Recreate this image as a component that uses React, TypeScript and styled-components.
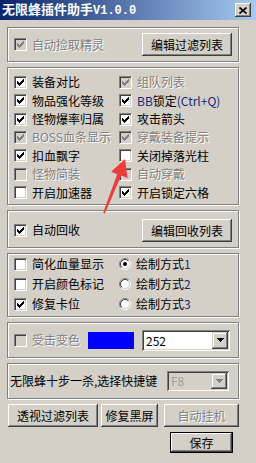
import React from 'react';
import styled, { createGlobalStyle, css } from 'styled-components';

const GlobalStyle = createGlobalStyle`
  html, body {
    margin: 0;
    padding: 0;
    background: #d4d0c8;
  }
  body {
    font-family: 'Noto Sans CJK SC', 'Liberation Sans', sans-serif;
    font-size: 12px;
    color: #000;
  }
`;

const disabledText = css`
  color: #808080;
  text-shadow: 1px 1px 0 #fff;
`;

const Window = styled.div`
  position: relative;
  width: 256px;
  height: 463px;
  background: #d4d0c8;
  overflow: hidden;
`;

const TitleBar = styled.div`
  height: 20px;
  display: flex;
  align-items: center;
  justify-content: space-between;
  padding: 0 5px 0 2px;
  background: linear-gradient(to right, #0a246a, #a6caf0);
`;

const TitleText = styled.span`
  color: #fff;
  font-weight: 700;
  font-size: 13px;
  line-height: 20px;
  white-space: nowrap;
`;

const TitleVersion = styled.span`
  font-family: 'Liberation Mono', monospace;
  font-size: 12px;
  font-weight: 700;
`;

const CloseButton = styled.div`
  box-sizing: border-box;
  width: 16px;
  height: 14px;
  display: flex;
  align-items: center;
  justify-content: center;
  background: #d4d0c8;
  box-shadow: inset -1px -1px #404040, inset 1px 1px #fff, inset -2px -2px #808080;
`;

const Body = styled.div`
  display: flex;
  flex-direction: column;
  gap: 5px;
  padding: 7px 17px 0 7px;
`;

const GroupBox = styled.div<{ $h: number }>`
  box-sizing: border-box;
  height: ${(p) => p.$h}px;
  border: 1px solid #808080;
  box-shadow: inset 1px 1px #fff, 1px 1px #fff;
`;

const SplitGroup = styled(GroupBox)<{ $pad?: string }>`
  display: flex;
  align-items: center;
  justify-content: space-between;
  padding: ${(p) => p.$pad ?? '0 6px'};
`;

const OptionGrid = styled(GroupBox)<{ $rows: string; $top: number }>`
  display: grid;
  grid-template-columns: 105px 1fr;
  grid-template-rows: ${(p) => p.$rows};
  align-items: center;
  padding: ${(p) => p.$top}px 0 0 6px;
`;

const ColorGroup = styled(GroupBox)`
  display: flex;
  align-items: center;
  padding: 0 0 0 6px;
`;

const CheckRow = styled.div<{ $w?: number }>`
  display: flex;
  align-items: center;
  gap: 5px;
  white-space: nowrap;
  ${(p) => p.$w && `width: ${p.$w}px; flex: none;`}
`;

const Label = styled.span<{ $disabled?: boolean }>`
  line-height: 14px;
  ${(p) => p.$disabled && disabledText}
`;

const Latin = styled.span`
  color: #16287c;
`;

const Box = styled.span<{ $disabled?: boolean }>`
  box-sizing: border-box;
  width: 13px;
  height: 13px;
  flex: none;
  border-top: 1px solid #808080;
  border-left: 1px solid #808080;
  border-right: 1px solid #fff;
  border-bottom: 1px solid #fff;
  box-shadow: inset 1px 1px #404040, inset -1px -1px #d4d0c8;
  background: ${(p) => (p.$disabled ? '#d4d0c8' : '#fff')};
`;

const PixelSvg = styled.svg`
  display: block;
  flex: none;
`;

const Button = styled.button<{ $w: number; $h?: number; $ml?: number; $default?: boolean; $disabled?: boolean }>`
  box-sizing: border-box;
  width: ${(p) => p.$w}px;
  height: ${(p) => p.$h ?? 23}px;
  padding: 0;
  margin: 0 0 0 ${(p) => p.$ml ?? 0}px;
  flex: none;
  background: #d4d0c8;
  font-family: inherit;
  font-size: 12px;
  color: #000;
  border: ${(p) => (p.$default ? '1px solid #000' : 'none')};
  box-shadow: inset -1px -1px #404040, inset 1px 1px #fff, inset -2px -2px #808080, inset 2px 2px #d4d0c8;
  ${(p) => p.$disabled && disabledText}
`;

const Swatch = styled.div`
  width: 46px;
  height: 17px;
  flex: none;
  background: #0000ff;
  margin-right: 8px;
`;

const Combo = styled.div<{ $w: number; $h: number; $disabled?: boolean }>`
  box-sizing: border-box;
  width: ${(p) => p.$w}px;
  height: ${(p) => p.$h}px;
  flex: none;
  display: flex;
  align-items: stretch;
  justify-content: space-between;
  padding: 2px;
  background: ${(p) => (p.$disabled ? '#d4d0c8' : '#fff')};
  box-shadow: inset 1px 1px #808080, inset -1px -1px #fff, inset 2px 2px #404040, inset -2px -2px #d4d0c8;
`;

const ComboText = styled.span<{ $disabled?: boolean }>`
  padding-left: 2px;
  line-height: ${(p) => (p.$disabled ? 16 : 17)}px;
  ${(p) => p.$disabled && 'color: #a0a0a0;'}
`;

const DropButton = styled.div`
  box-sizing: border-box;
  width: 16px;
  display: flex;
  align-items: center;
  justify-content: center;
  background: #d4d0c8;
  box-shadow: inset -1px -1px #404040, inset 1px 1px #d4d0c8, inset -2px -2px #808080, inset 2px 2px #fff;
`;

const ShortcutText = styled.span`
  white-space: nowrap;
  line-height: 14px;
`;

const ButtonRow = styled.div`
  display: flex;
  padding-left: 1px;
`;

const SaveRow = styled.div`
  display: flex;
  justify-content: flex-end;
  padding-right: 6px;
`;

const Overlay = styled.svg`
  position: absolute;
  left: 0;
  top: 0;
  pointer-events: none;
`;

const CHECK_TOPS = [2, 3, 4, 3, 2, 1, 0];

const CheckBox = ({ checked, disabled }: { checked?: boolean; disabled?: boolean }) => (
  <Box $disabled={disabled}>
    {checked && (
      <PixelSvg width="11" height="11" shapeRendering="crispEdges">
        {CHECK_TOPS.map((y, i) => (
          <rect key={i} x={2 + i} y={2 + y} width="1" height="3" fill={disabled ? '#808080' : '#000'} />
        ))}
      </PixelSvg>
    )}
  </Box>
);

const Radio = ({ checked }: { checked?: boolean }) => (
  <PixelSvg width="12" height="12">
    <circle cx="6" cy="6" r="4.5" fill="#fff" />
    <path d="M2.11 9.89A5.5 5.5 0 0 1 9.89 2.11" stroke="#808080" fill="none" />
    <path d="M9.89 2.11A5.5 5.5 0 0 1 2.11 9.89" stroke="#fff" fill="none" />
    <path d="M2.82 9.18A4.5 4.5 0 0 1 9.18 2.82" stroke="#404040" fill="none" />
    <path d="M9.18 2.82A4.5 4.5 0 0 1 2.82 9.18" stroke="#d4d0c8" fill="none" />
    {checked && <circle cx="6" cy="6" r="2" fill="#000" />}
  </PixelSvg>
);

const Arrow = ({ disabled }: { disabled?: boolean }) => (
  <PixelSvg width="7" height="5" shapeRendering="crispEdges">
    {[7, 5, 3, 1].map((w, i) => (
      <rect key={i} x={(7 - w) / 2} y={i} width={w} height="1" fill={disabled ? '#808080' : '#000'} />
    ))}
  </PixelSvg>
);

type Option = { label: React.ReactNode; checked?: boolean; disabled?: boolean };

const CheckItem = ({ label, checked, disabled, w }: Option & { w?: number }) => (
  <CheckRow $w={w}>
    <CheckBox checked={checked} disabled={disabled} />
    <Label $disabled={disabled}>{label}</Label>
  </CheckRow>
);

const mainOptions: Option[] = [
  { label: '装备对比', checked: true },
  { label: '组队列表', checked: true, disabled: true },
  { label: '物品强化等级', checked: true },
  { label: <><Latin>BB</Latin>锁定<Latin>(Ctrl+Q)</Latin></>, checked: true },
  { label: '怪物爆率归属', checked: true },
  { label: '攻击箭头', checked: true },
  { label: 'BOSS血条显示', checked: true, disabled: true },
  { label: '穿戴装备提示', checked: true, disabled: true },
  { label: '扣血飘字', checked: true },
  { label: '关闭掉落光柱' },
  { label: '怪物简装', disabled: true },
  { label: '自动穿戴', disabled: true },
  { label: '开启加速器' },
  { label: '开启锁定六格', checked: true },
];

const displayOptions: Option[] = [
  { label: '简化血量显示' },
  { label: '开启颜色标记' },
  { label: '修复卡位', checked: true },
];

export default function App() {
  return (
    <Window>
      <GlobalStyle />
      <TitleBar>
        <TitleText>
          无限蜂插件助手<TitleVersion>V1.0.0</TitleVersion>
        </TitleText>
        <CloseButton>
          <PixelSvg width="8" height="7">
            <path d="M0.5 0.5L7.5 6.5M7.5 0.5L0.5 6.5" stroke="#000" strokeWidth="1.6" />
          </PixelSvg>
        </CloseButton>
      </TitleBar>

      <Body>
        <SplitGroup $h={35}>
          <CheckItem label="自动捡取精灵" checked disabled />
          <Button $w={90}>编辑过滤列表</Button>
        </SplitGroup>

        <OptionGrid $h={138} $top={5} $rows="18px 19px 18px 18px 19px 18px 19px">
          {mainOptions.map((o, i) => (
            <CheckItem key={i} {...o} />
          ))}
        </OptionGrid>

        <SplitGroup $h={38} $pad="2px 6px 0 6px">
          <CheckItem label="自动回收" checked />
          <Button $w={90}>编辑回收列表</Button>
        </SplitGroup>

        <OptionGrid $h={64} $top={0} $rows="20px 20px 20px">
          {displayOptions.map((o, i) => (
            <React.Fragment key={i}>
              <CheckItem {...o} />
              <CheckRow>
                <Radio checked={i === 0} />
                <Label>
                  绘制方式<Latin>{i + 1}</Latin>
                </Label>
              </CheckRow>
            </React.Fragment>
          ))}
        </OptionGrid>

        <ColorGroup $h={36}>
          <CheckItem label="受击变色" disabled w={74} />
          <Swatch />
          <Combo $w={88} $h={21}>
            <ComboText>252</ComboText>
            <DropButton>
              <Arrow />
            </DropButton>
          </Combo>
        </ColorGroup>

        <SplitGroup $h={36} $pad="0 9px 0 2px">
          <ShortcutText>无限蜂十步一杀,选择快捷键</ShortcutText>
          <Combo $w={62} $h={20} $disabled>
            <ComboText $disabled>F8</ComboText>
            <DropButton>
              <Arrow disabled />
            </DropButton>
          </Combo>
        </SplitGroup>

        <ButtonRow>
          <Button $w={90}>透视过滤列表</Button>
          <Button $w={57} $ml={3}>修复黑屏</Button>
          <Button $w={75} $ml={6} $disabled>自动挂机</Button>
        </ButtonRow>

        <SaveRow>
          <Button $w={63} $h={21} $default>保存</Button>
        </SaveRow>
      </Body>

      <Overlay width="256" height="463">
        <polygon
          points="125,159 127.5,178 121.2,175.6 104.8,213.4 103.2,212.6 117.2,174.2 111.2,171.8"
          fill="#ef3b3b"
        />
      </Overlay>
    </Window>
  );
}
